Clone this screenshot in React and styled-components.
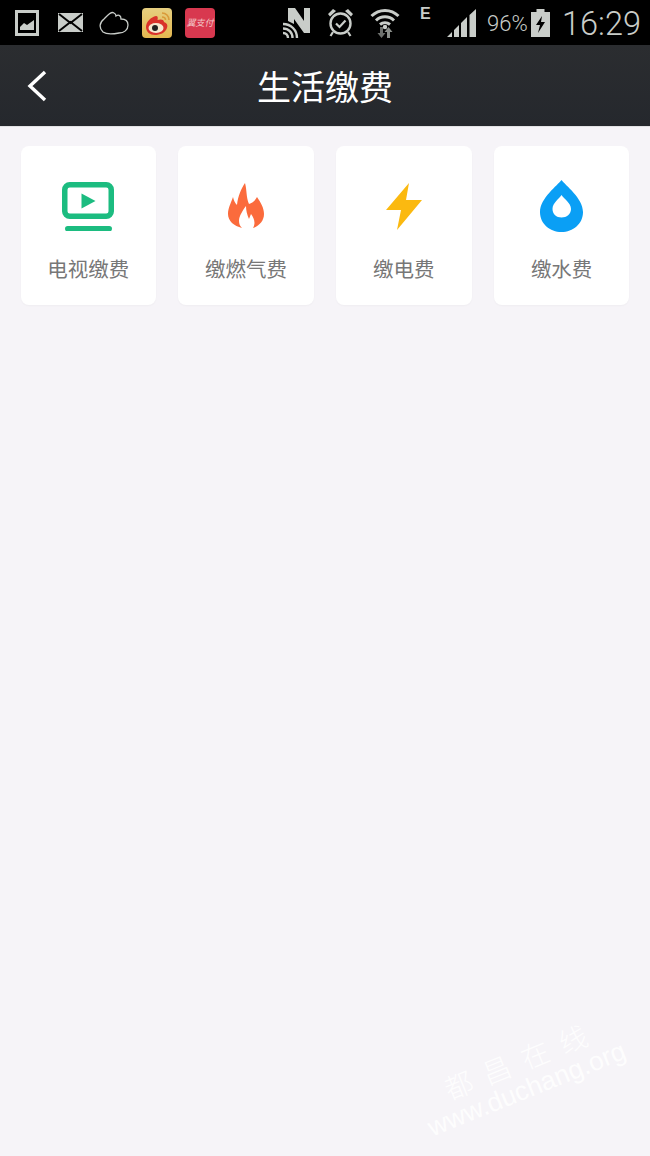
import React from "react";
import styled, { createGlobalStyle } from "styled-components";

const services = [
    { label: "电视缴费", icon: <TvIcon /> },
    { label: "缴燃气费", icon: <FlameIcon /> },
    { label: "缴电费", icon: <BoltIcon /> },
    { label: "缴水费", icon: <DropIcon /> },
];

function TvIcon() {
    return (
        <svg width="52" height="49" viewBox="0 0 52 49">
            <rect x="2.75" y="2.75" width="46.5" height="31.5" rx="5" fill="none" stroke="#1cbc80" strokeWidth="5.5" />
            <path d="M19.500 11.500 L33.500 19 L19.500 26.500 Z" fill="#1cbc80" />
            <rect x="3" y="44" width="47" height="5.500" rx="2.750" fill="#1cbc80" />
        </svg>
    );
}

function FlameIcon() {
    return (
        <svg width="36" height="46" viewBox="0 0 36 46">
            <path
                d="M17 0 C19 7 18 14 21 21 C24 20 27 18 29 14 C33 20 36 25 36 31 C36 38 31 43 25 45 C28 40 26 35 23 31 L21 36 C19 32 18 27 18 23 C15 27 11 33 11 38 C11 41 12 43 14 45 C6 43 0 38 0 31 C0 25 3 20 5 14 C6 18 7 20 9 22 C10 13 13 6 17 0 Z"
                fill="#fb6b3c"
            />
        </svg>
    );
}

function BoltIcon() {
    return (
        <svg width="36" height="47" viewBox="0 0 36 47">
            <path d="M23 0 L0 27 L15 27 L11 47 L36 17 L20 17 Z" fill="#fbb910" />
        </svg>
    );
}

function DropIcon() {
    return (
        <svg width="43" height="52" viewBox="0 0 43 52">
            <path
                d="M21.5 0 C25 5 43 18 43 32 C43 44 33 52 21.5 52 C10 52 0 44 0 32 C0 18 18 5 21.5 0 Z M21.5 15 C19 19 12.5 23 12.5 29 C12.5 34 16.5 37.5 21.5 37.5 C26.5 37.5 31 34 31 29 C31 23 24 19 21.5 15 Z"
                fill="#0a9ff5"
                fillRule="evenodd"
            />
        </svg>
    );
}

const GlobalStyle = createGlobalStyle`
    html, body {
        margin: 0;
        padding: 0;
        background: #f6f4f8;
    }
`;

const Page = styled.div`
    position: relative;
    width: 650px;
    height: 1156px;
    overflow: hidden;
    background: #f6f4f8;
    font-family: "Noto Sans CJK SC", "Noto Sans", sans-serif;
`;

const StatusBar = styled.div`
    display: flex;
    align-items: center;
    height: 45px;
    padding-left: 15px;
    box-sizing: border-box;
    background: #000;
    color: #c9cdc9;
`;

const StatusIcon = styled.svg`
    flex: none;
    margin-left: ${(p) => p.$gap || 0}px;
`;

const RedApp = styled.div`
    flex: none;
    display: flex;
    align-items: center;
    justify-content: center;
    width: 30px;
    height: 30px;
    margin-left: 13px;
    border-radius: 4px;
    background: #d8384f;
    color: #f3c9c9;
    font-size: 9px;
    font-style: italic;
    white-space: nowrap;
`;

const NetworkType = styled.span`
    flex: none;
    align-self: flex-start;
    width: 10px;
    margin: 3px 0 0 20px;
    font-family: "Liberation Sans", sans-serif;
    font-size: 16px;
    font-weight: 700;
    line-height: 22px;
`;

const Battery = styled.span`
    flex: none;
    width: 40px;
    margin: 3px 0 0 11px;
    font-family: Roboto, sans-serif;
    font-size: 22px;
    font-weight: 300;
    line-height: 42px;
    white-space: nowrap;
`;

const Clock = styled.span`
    flex: none;
    margin: 3px 0 0 12px;
    font-family: Roboto, sans-serif;
    font-size: 32.5px;
    font-weight: 300;
    line-height: 42px;
`;

const Header = styled.header`
    position: relative;
    display: flex;
    align-items: center;
    justify-content: center;
    height: 82px;
    box-sizing: border-box;
    border-bottom: 1px solid #e2e2e4;
    background: linear-gradient(#2b2d30, #25282d);
    color: #fff;
    font-size: 34px;
`;

const BackButton = styled.svg`
    position: absolute;
    left: 27px;
    top: 25px;
`;

const Grid = styled.main`
    display: grid;
    grid-template-columns: repeat(4, 1fr);
    gap: 22.33px;
    padding: 19px 20.67px;
`;

const Card = styled.div`
    display: flex;
    flex-direction: column;
    align-items: center;
    height: 159px;
    padding-top: 30px;
    box-sizing: border-box;
    border-radius: 8px;
    background: #fff;
    box-shadow: 0 1px 2px rgba(0, 0, 0, 0.03);
`;

const IconBox = styled.div`
    display: flex;
    align-items: center;
    justify-content: center;
    height: 60px;
`;

const Label = styled.span`
    margin-top: 18px;
    color: #777;
    font-size: 20.5px;
    line-height: 28px;
    white-space: nowrap;
`;

const Watermark = styled.div`
    position: absolute;
    left: 406px;
    top: 1045px;
    display: flex;
    flex-direction: column;
    align-items: center;
    width: 230px;
    transform: rotate(-22deg);
    color: rgba(255, 255, 255, 0.85);
    pointer-events: none;
`;

const WatermarkName = styled.span`
    margin-right: -13px;
    font-family: "Noto Sans CJK SC", sans-serif;
    font-size: 28px;
    font-weight: 300;
    letter-spacing: 13px;
    line-height: 30px;
    white-space: nowrap;
`;

const WatermarkUrl = styled.span`
    font-family: "Liberation Sans", sans-serif;
    font-size: 26.5px;
    line-height: 30px;
    white-space: nowrap;
`;

const App = () => {
    return (
        <Page>
            <GlobalStyle />
            <StatusBar>
                {/* picture */}
                <StatusIcon width="24" height="26" viewBox="0 0 24 26">
                    <rect x="1.5" y="1.5" width="21" height="23" fill="none" stroke="#c9cdc9" strokeWidth="3" />
                    <path d="M5 20 L5 17 L9 13 L12 15 L19 10 L19 20 Z" fill="#c9cdc9" />
                </StatusIcon>
                {/* mail */}
                <StatusIcon $gap={19} width="25" height="19" viewBox="0 0 25 19">
                    <rect width="25" height="19" fill="#c9cdc9" />
                    <path d="M1 1 L12.5 10 L24 1 M1 18 L12.5 9 L24 18" fill="none" stroke="#000" strokeWidth="2" />
                </StatusIcon>
                {/* cloud */}
                <StatusIcon $gap={16} width="30" height="24" viewBox="0 0 30 24">
                    <path
                        d="M4 21 C0 17 0 12 5 8 C9 4 12 0 15 2 C17 3 17 4 17 5 C20 3 22 5 22 8 C26 8 29 10 29 14 C29 19 25 22 20 22 C15 23 8 24 4 21 Z"
                        fill="none"
                        stroke="#c9cdc9"
                        strokeWidth="1.3"
                    />
                </StatusIcon>
                {/* weibo */}
                <StatusIcon $gap={13} width="30" height="30" viewBox="0 0 30 30">
                    <defs>
                        <linearGradient id="weiboBack" x1="0" y1="0" x2="0" y2="1">
                            <stop offset="0" stopColor="#e6cf80" />
                            <stop offset="1" stopColor="#e3b750" />
                        </linearGradient>
                    </defs>
                    <rect width="30" height="30" rx="4" fill="url(#weiboBack)" />
                    <path
                        d="M4 19 C4 14 9 9 14 8 C16 8 16 10 15.5 12 C18 11 22 11 22 14 C25 15 26 17 25 20 C23 25 18 27 13 27 C8 27 4 24 4 19 Z"
                        fill="#d9322b"
                    />
                    <ellipse cx="14" cy="20" rx="7.5" ry="5" fill="#f6e9d0" />
                    <circle cx="13" cy="20" r="3" fill="#222" />
                    <path d="M20 5 C24 5 27 8 27 12 M20 9 C22 9 23.5 10 23.5 12" fill="none" stroke="#d99a3a" strokeWidth="1.6" />
                </StatusIcon>
                <RedApp>翼支付</RedApp>
                {/* nfc N */}
                <StatusIcon $gap={68} width="27" height="30" viewBox="0 0 27 30">
                    <path d="M5 0 L12 0 L21 13 L21 0 L27 0 L27 25 L21 25 L11 11 L11 16 L5 13 Z" fill="#c9cdc9" />
                    <path d="M0 16 C8 16 14 22 14 30 M0 20.500 C5.500 20.500 9.500 24.500 9.500 30 M0 25 C3 25 5 27 5 30" fill="none" stroke="#c9cdc9" strokeWidth="2.400" />
                </StatusIcon>
                {/* alarm */}
                <StatusIcon $gap={17} width="27" height="29" viewBox="0 0 27 29">
                    <circle cx="13.5" cy="15.5" r="10" fill="none" stroke="#c9cdc9" strokeWidth="2.4" />
                    <path d="M9 15.5 L12.5 19 L18.5 12.5" fill="none" stroke="#c9cdc9" strokeWidth="2.2" />
                    <path d="M1 6 L6 1 L9 3 L3 8.5 Z M26 6 L21 1 L18 3 L24 8.5 Z" fill="#c9cdc9" />
                    <path d="M6 24 L3.5 28 M21 24 L23.5 28" stroke="#c9cdc9" strokeWidth="2.2" />
                </StatusIcon>
                {/* wifi */}
                <StatusIcon $gap={16} width="30" height="31" viewBox="0 0 30 31">
                    <path d="M1.500 9 C9 1.500 21 1.500 28.500 9 M6 13.500 C11 8.500 19 8.500 24 13.500 M10 17.500 C13 15 17 15 20 17.500" fill="none" stroke="#c9cdc9" strokeWidth="3" />
                    <circle cx="15" cy="20" r="2.200" fill="#c9cdc9" />
                    <path d="M10 20 L13 20 L13 26 L15.500 26 L11.500 31 L7.500 26 L10 26 Z" fill="#6d706d" />
                    <path d="M17 31 L20 31 L20 25 L22.500 25 L18.500 20 L14.500 25 L17 25 Z" fill="#8b8f8b" />
                </StatusIcon>
                <NetworkType>E</NetworkType>
                {/* signal bars */}
                <StatusIcon $gap={17} width="29" height="28" viewBox="0 0 29 28">
                    <path d="M0 28 L5 23 L5 28 Z M7 21 L12 16 L12 28 L7 28 Z M14 14 L20 8 L20 28 L14 28 Z M22.500 6 L29 0 L29 28 L22.500 28 Z" fill="#c9cdc9" />
                </StatusIcon>
                <Battery>96%</Battery>
                {/* battery */}
                <StatusIcon $gap={4} width="19" height="28" viewBox="0 0 19 28">
                    <path
                        d="M5.500 0 L13.500 0 L13.500 3 L19 3 L19 28 L0 28 L0 3 L5.500 3 Z M11 7 L5 16 L9 16 L7 24 L14 13 L10 13 Z"
                        fill="#c9cdc9"
                        fillRule="evenodd"
                    />
                </StatusIcon>
                <Clock>16:29</Clock>
            </StatusBar>
            <Header>
                <BackButton width="20" height="32" viewBox="0 0 20 32">
                    <path d="M18 2 L3 16 L18 30" fill="none" stroke="#fff" strokeWidth="3.4" />
                </BackButton>
                生活缴费
            </Header>
            <Grid>
                {services.map((service) => (
                    <Card key={service.label}>
                        <IconBox>{service.icon}</IconBox>
                        <Label>{service.label}</Label>
                    </Card>
                ))}
            </Grid>
            <Watermark>
                <WatermarkName>都昌在线</WatermarkName>
                <WatermarkUrl>www.duchang.org</WatermarkUrl>
            </Watermark>
        </Page>
    );
};

export default App;
